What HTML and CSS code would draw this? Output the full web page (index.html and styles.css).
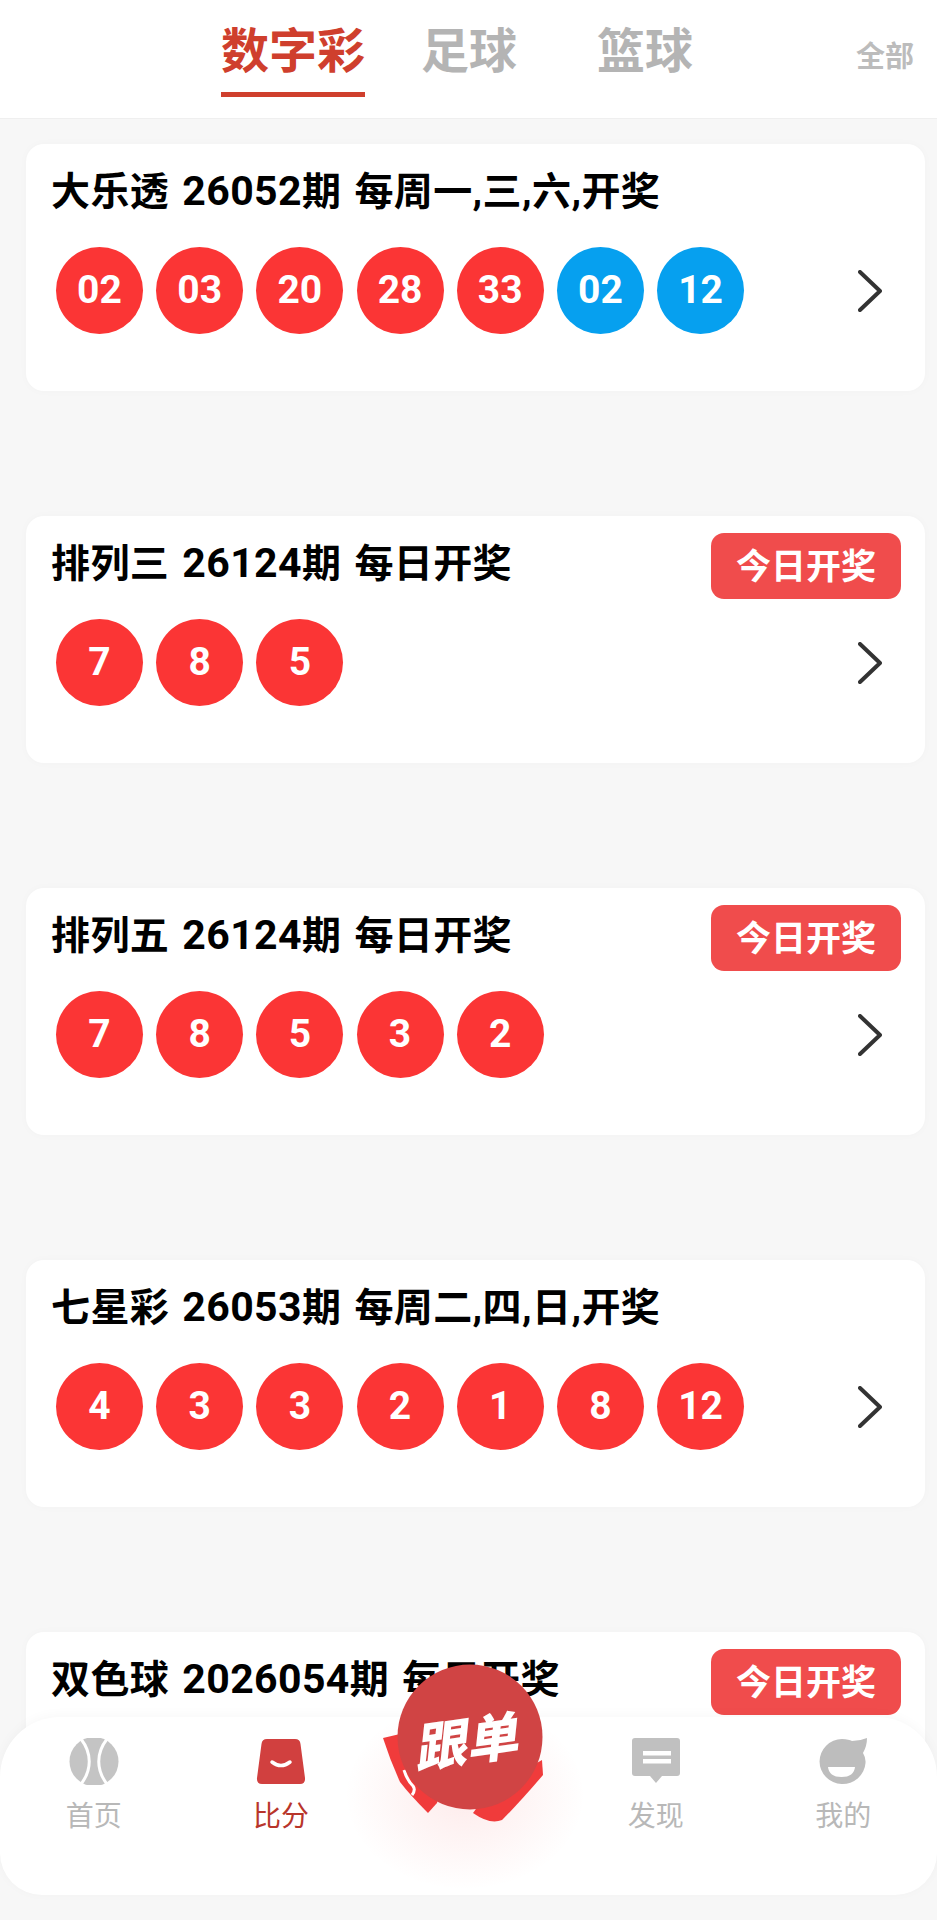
FILE: index.html
```html
<!DOCTYPE html>
<html lang="zh-CN">
<head>
    <meta charset="UTF-8">
    <meta name="viewport" content="width=device-width, initial-scale=1.0">
    <title>开奖</title>
    <link rel="stylesheet" href="styles.css">
</head>
<body>
    <header class="top-bar">
        <div class="tabs">
            <a class="tab active"><span>数字彩</span></a>
            <a class="tab"><span>足球</span></a>
            <a class="tab"><span>篮球</span></a>
        </div>
        <a class="all-link">全部</a>
    </header>

    <main class="list">
        <section class="card">
            <div class="card-head">
                <h2 class="card-title">大乐透 <span class="issue">26052</span>期 每周一,三,六,开奖</h2>
            </div>
            <div class="card-body">
                <div class="balls">
                    <span class="ball">02</span><span class="ball">03</span><span class="ball">20</span><span class="ball">28</span><span class="ball">33</span><span class="ball blue">02</span><span class="ball blue">12</span>
                </div>
                <svg class="chevron" viewBox="0 0 24 42"><path d="M2 2 L22 21 L2 40"/></svg>
            </div>
        </section>

        <section class="card">
            <div class="card-head">
                <h2 class="card-title">排列三 <span class="issue">26124</span>期 每日开奖</h2>
                <span class="badge">今日开奖</span>
            </div>
            <div class="card-body">
                <div class="balls">
                    <span class="ball">7</span><span class="ball">8</span><span class="ball">5</span>
                </div>
                <svg class="chevron" viewBox="0 0 24 42"><path d="M2 2 L22 21 L2 40"/></svg>
            </div>
        </section>

        <section class="card">
            <div class="card-head">
                <h2 class="card-title">排列五 <span class="issue">26124</span>期 每日开奖</h2>
                <span class="badge">今日开奖</span>
            </div>
            <div class="card-body">
                <div class="balls">
                    <span class="ball">7</span><span class="ball">8</span><span class="ball">5</span><span class="ball">3</span><span class="ball">2</span>
                </div>
                <svg class="chevron" viewBox="0 0 24 42"><path d="M2 2 L22 21 L2 40"/></svg>
            </div>
        </section>

        <section class="card">
            <div class="card-head">
                <h2 class="card-title">七星彩 <span class="issue">26053</span>期 每周二,四,日,开奖</h2>
            </div>
            <div class="card-body">
                <div class="balls">
                    <span class="ball">4</span><span class="ball">3</span><span class="ball">3</span><span class="ball">2</span><span class="ball">1</span><span class="ball">8</span><span class="ball">12</span>
                </div>
                <svg class="chevron" viewBox="0 0 24 42"><path d="M2 2 L22 21 L2 40"/></svg>
            </div>
        </section>

        <section class="card">
            <div class="card-head">
                <h2 class="card-title">双色球 <span class="issue">2026054</span>期 每日开奖</h2>
                <span class="badge">今日开奖</span>
            </div>
        </section>
    </main>

    <nav class="bottom-nav">
        <a class="nav-item">
            <svg class="nav-icon" viewBox="0 0 50 47">
                <circle cx="25" cy="23.5" r="24.5" fill="#c4c4c4"/>
                <path d="M12 1 C23 15 23 32 12 46 M38 1 C27 15 27 32 38 46" fill="none" stroke="#fff" stroke-width="3"/>
            </svg>
            <span>首页</span>
        </a>
        <a class="nav-item active">
            <svg class="nav-icon" viewBox="0 0 50 47">
                <path d="M11 1 H39 Q44 1 44.500 6 L49 40 Q49.500 46 44 46 H6 Q.5 46 1 40 L5.500 6 Q6 1 11 1 Z" fill="#d1403f"/>
                <path d="M16 24 Q25 31 34 24" fill="none" stroke="#fff" stroke-width="3.500" stroke-linecap="round"/>
            </svg>
            <span>比分</span>
        </a>
        <div class="nav-item fab-slot">
            <div class="fab">
                <svg class="fab-art" viewBox="0 0 170 170">
                    <path d="M3 78 L20 74 L60 130 L57 143 L48 153 Q30 135 20 122 Q10 100 3 78 Z" fill="#f03b3b"/>
                    <path d="M24 110 Q27 120 33 126 Q36 130 32 135" fill="none" stroke="#fff" stroke-width="3"/>
                    <path d="M162 100 L163 115 Q140 142 122 160 Q110 165 93 153 L110 130 Z" fill="#f03b3b"/>
                    <circle cx="90" cy="77" r="72.500" fill="#d04444"/>
                </svg>
                <span class="fab-text">跟单</span>
            </div>
        </div>
        <a class="nav-item">
            <svg class="nav-icon" viewBox="0 0 50 47">
                <path d="M4 0 H46 Q49 0 49 3 V35 Q49 38 46 38 H31 L25 45 L19 38 H4 Q1 38 1 35 V3 Q1 0 4 0 Z" fill="#c0c0c0"/>
                <rect x="12" y="13" width="28" height="4.500" fill="#fff"/>
                <rect x="12" y="21" width="28" height="4.500" fill="#fff"/>
            </svg>
            <span>发现</span>
        </a>
        <a class="nav-item">
            <svg class="nav-icon" viewBox="0 0 50 47">
                <path d="M24 1 C29 1 32 2 34 3 Q42 3 49 0 Q49 8 45 15 Q48 20 47.500 25 A23 22.500 0 1 1 24 1 Z" fill="#bdbdbd"/>
                <path d="M10 29 H37 Q36 39 23.500 39 Q11 39 10 29 Z" fill="#fff"/>
            </svg>
            <span>我的</span>
        </a>
    </nav>
</body>
</html>
```

FILE: styles.css
```css
* {
    box-sizing: border-box;
}

body {
    position: relative;
    margin: 0;
    height: 1920px;
    overflow: hidden;
    background-color: #f7f7f7;
    font-family: "Noto Sans CJK SC", "Liberation Sans", sans-serif;
}

/* top tabs */
.top-bar {
    display: flex;
    height: 119px;
    padding: 0 23px 0 205px;
    background-color: #fff;
    border-bottom: 1px solid #efefef;
}

.tabs {
    display: flex;
}

.tab {
    display: flex;
    justify-content: center;
    width: 176px;
    font-size: 48px;
    font-weight: 700;
    color: #b4b4b4;
}

.tab span {
    height: 97px;
    padding-top: 12px;
    line-height: 70px;
}

.tab.active {
    color: #cf3f2d;
}

.tab.active span {
    border-bottom: 5px solid #cf3f2d;
}

.all-link {
    margin-left: auto;
    padding-top: 34px;
    line-height: 40px;
    font-size: 29px;
    font-weight: 700;
    color: #bcbcbc;
}

/* lottery cards */
.list {
    display: flex;
    flex-direction: column;
    gap: 125px;
    padding: 25px 12px 0 26px;
}

.card {
    height: 247px;
    flex-shrink: 0;
    padding: 17px 24px 0 25px;
    background-color: #fff;
    border-radius: 18px;
    box-shadow: 0 0 10px rgba(0, 0, 0, 0.025);
}

.card-head {
    display: flex;
    justify-content: space-between;
    align-items: flex-start;
    height: 66px;
}

.card-title {
    margin: 0;
    line-height: 60px;
    font-family: Roboto, "Noto Sans CJK SC", sans-serif;
    font-size: 39px;
    font-weight: 700;
    letter-spacing: 0.4px;
    word-spacing: 3px;
    color: #000;
}

.issue {
    font-size: 41px;
}

.badge {
    width: 190px;
    height: 66px;
    line-height: 62px;
    text-align: center;
    font-size: 35px;
    font-weight: 700;
    color: #fff;
    background-color: #f04c4c;
    border-radius: 13px;
}

.card-body {
    display: flex;
    justify-content: space-between;
    align-items: center;
    margin-top: 20px;
    padding: 0 19px 0 5px;
}

.balls {
    display: flex;
    gap: 13.2px;
}

.ball {
    width: 87px;
    height: 87px;
    line-height: 86px;
    text-align: center;
    border-radius: 50%;
    font-family: Roboto, sans-serif;
    font-size: 39px;
    font-weight: 700;
    color: #fff;
    background-color: #fb3535;
}

.ball.blue {
    background-color: #06a0ef;
}

.chevron {
    width: 24px;
    height: 42px;
    fill: none;
    stroke: #333;
    stroke-width: 4;
    stroke-linecap: round;
    stroke-linejoin: round;
}

/* bottom nav */
.bottom-nav {
    position: absolute;
    left: 0;
    right: 0;
    bottom: 25px;
    display: flex;
    height: 178px;
    padding-top: 21px;
    background-color: #fff;
    border-radius: 60px 60px 42px 42px;
    box-shadow: 0 -2px 12px rgba(0, 0, 0, 0.03);
}

.nav-item {
    position: relative;
    display: flex;
    flex-direction: column;
    align-items: center;
    width: 20%;
    font-size: 28px;
    line-height: 40px;
    color: #b8b8b8;
}

.nav-item.active {
    color: #b8352b;
}

.nav-icon {
    width: 50px;
    height: 47px;
    margin-bottom: 9px;
}

.fab {
    position: absolute;
    top: -78px;
    left: 5px;
    width: 170px;
    height: 170px;
}

.fab::before {
    content: "";
    position: absolute;
    top: 40px;
    left: -35px;
    width: 240px;
    height: 190px;
    background: radial-gradient(closest-side, rgba(240, 60, 60, 0.1), rgba(240, 60, 60, 0));
}

.fab-art {
    position: relative;
    display: block;
    width: 170px;
    height: 170px;
}

.fab-text {
    position: absolute;
    top: 47px;
    left: 25px;
    width: 120px;
    line-height: 64px;
    text-align: center;
    font-size: 52px;
    font-weight: 900;
    font-style: italic;
    color: #fff;
    transform: rotate(-8deg);
}
```
